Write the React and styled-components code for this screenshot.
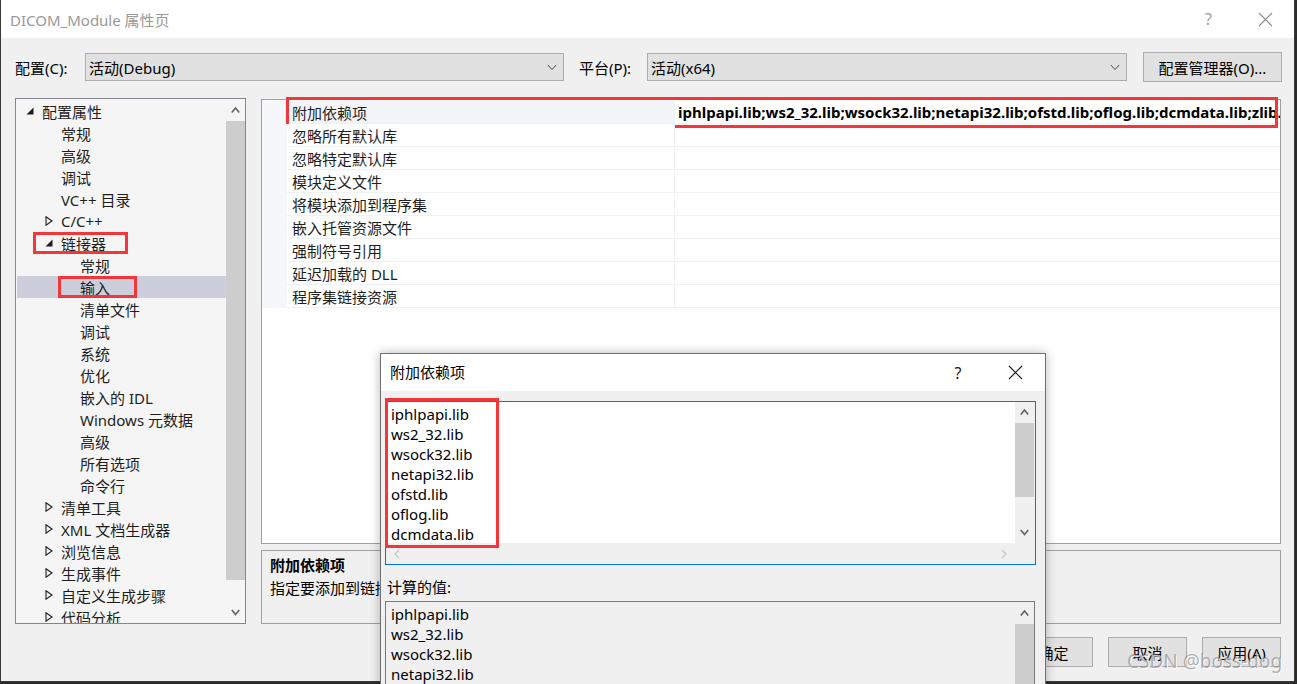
import React from 'react'
import styled, { createGlobalStyle } from 'styled-components'

const FONT = `"Noto Sans", "Noto Sans CJK SC", sans-serif`
const RED = '#f2363a'

const Global = createGlobalStyle`
  html, body { margin: 0; padding: 0; background: #f0f0f0; }
  body { font-family: ${FONT}; font-size: 15px; color: #1e1e1e; }
  * { box-sizing: border-box; }
`

const Screen = styled.div`
  position: relative;
  width: 1297px;
  height: 684px;
  overflow: hidden;
  background: #2b2b2b;
`

const Window = styled.div`
  width: 1295px;
  height: 682px;
  display: flex;
  flex-direction: column;
  background: #f0f0f0;
  border-left: 1px solid #3a3a3a;
  border-right: 1px solid #3a3a3a;
  border-bottom: 1px solid #3a3a3a;
`

const TitleBar = styled.div`
  height: ${p => p.$h || 38}px;
  flex: none;
  display: flex;
  align-items: center;
  background: #fff;
  padding-left: 9px;
  color: ${p => (p.$active ? '#000' : '#999')};
  font-size: 15px;
`

const TitleText = styled.div`
  flex: 1;
  padding-bottom: ${p => p.$pb || 0}px;
`

const TitleBtn = styled.div`
  width: ${p => p.$w || 57}px;
  height: 100%;
  display: flex;
  align-items: center;
  justify-content: center;
  color: ${p => (p.$active ? '#1a1a1a' : '#a0a0a0')};
  font-size: 16px;
`

const ConfigRow = styled.div`
  display: flex;
  align-items: center;
  height: 30px;
  margin-top: 14px;
  padding-left: 14px;
`

const Label = styled.div`
  width: ${p => p.$w}px;
  flex: none;
  margin-left: ${p => p.$ml || 0}px;
  font-size: 15px;
  color: #000;
`

const Combo = styled.div`
  width: ${p => p.$w}px;
  height: 28px;
  flex: none;
  display: flex;
  align-items: center;
  justify-content: space-between;
  padding: 0 6px 0 3px;
  background: #e1e1e1;
  border: 1px solid #adadad;
  color: #000;
`

const Button = styled.div`
  width: ${p => p.$w || 79}px;
  height: 30px;
  flex: none;
  display: flex;
  align-items: center;
  justify-content: center;
  background: #e1e1e1;
  border: 1px solid #adadad;
  color: #000;
  margin-left: ${p => p.$ml || 0}px;
`

const Main = styled.div`
  display: flex;
  gap: 15px;
  margin-top: 16px;
  padding: 0 13px 0 14px;
`

const TreePanel = styled.div`
  width: 231px;
  height: 526px;
  flex: none;
  display: flex;
  background: #f5f5f5;
  border: 1px solid #828790;
`

const TreeList = styled.div`
  flex: 1;
  padding-top: 1px;
  overflow: hidden;
`

const TreeRow = styled.div`
  position: relative;
  height: 22px;
  display: flex;
  align-items: center;
  padding-left: ${p => 9 + p.$level * 19}px;
  margin-left: 1px;
  background: ${p => (p.$sel ? '#cccedb' : 'transparent')};
  white-space: nowrap;
  color: #1e1e1e;
`

const Twisty = styled.div`
  width: 16px;
  flex: none;
  display: flex;
  align-items: center;
`

const Mark = styled.div`
  position: absolute;
  top: 0;
  bottom: 0;
  left: ${p => p.$left}px;
  width: ${p => p.$w}px;
  border: 3px solid ${RED};
  pointer-events: none;
`

const VScroll = styled.div`
  width: ${p => p.$w || 19}px;
  flex: none;
  display: flex;
  flex-direction: column;
  background: ${p => p.$bg || 'transparent'};
`

const ScrollArrow = styled.div`
  height: ${p => p.$h || 22}px;
  flex: none;
  display: flex;
  align-items: center;
  justify-content: center;
`

const Thumb = styled.div`
  height: ${p => p.$h}px;
  flex: none;
  background: #cdcdcd;
`

const Spacer = styled.div`
  flex: 1;
`

const RightCol = styled.div`
  flex: 1;
  display: flex;
  flex-direction: column;
`

const Grid = styled.div`
  height: 445px;
  margin-top: 1px;
  background: #fff;
  border: 1px solid #a0a0a0;
  padding-top: 1px;
`

const GridRow = styled.div`
  position: relative;
  display: grid;
  grid-template-columns: 25px 387px 1fr;
  height: 23px;
`

const Gutter = styled.div`
  background: #f5f7fa;
`

const NameCell = styled.div`
  display: flex;
  align-items: center;
  padding-left: 5px;
  background: ${p => (p.$sel ? '#f2f4f8' : '#fff')};
  border-bottom: 1px solid #eef1f6;
  color: #1e1e1e;
  white-space: nowrap;
`

const ValueCell = styled.div`
  display: flex;
  align-items: center;
  padding-left: 3px;
  border-left: 1px solid #eef1f6;
  border-bottom: 1px solid #eef1f6;
  font-weight: 700;
  color: #000;
  white-space: nowrap;
  overflow: hidden;
`

const RowMark = styled.div`
  position: absolute;
  top: -4px;
  bottom: -4px;
  left: 24px;
  right: 2px;
  border: 3px solid ${RED};
`

const Desc = styled.div`
  height: 74px;
  margin-top: 6px;
  border: 1px solid #a0a0a0;
  padding: 3px 8px;
  overflow: hidden;
  white-space: nowrap;
`

const DescTitle = styled.div`
  font-weight: 700;
  line-height: 23px;
  color: #000;
`

const DescText = styled.div`
  line-height: 23px;
  color: #000;
`

const ButtonRow = styled.div`
  display: flex;
  justify-content: flex-end;
  gap: 15px;
  margin-top: 13px;
  padding-right: 13px;
`

const Watermark = styled.div`
  position: absolute;
  left: 1127px;
  top: 648px;
  font-size: 19px;
  color: rgba(120, 120, 120, 0.55);
  text-shadow: 1px 1px 0 rgba(255, 255, 255, 0.8);
`

const Dialog = styled.div`
  position: absolute;
  left: 380px;
  top: 353px;
  width: 666px;
  height: 345px;
  display: flex;
  flex-direction: column;
  background: #f0f0f0;
  border: 1px solid #707070;
  box-shadow: 0 0 10px rgba(0, 0, 0, 0.28);
`

const DialogBody = styled.div`
  padding: 10px 8px 0 4px;
  display: flex;
  flex-direction: column;
`

const EditBox = styled.div`
  position: relative;
  width: 651px;
  height: 164px;
  display: grid;
  grid-template-columns: 1fr 20px;
  grid-template-rows: 1fr 21px;
  border: 1px solid #0078d7;
  background: #f0f0f0;
`

const Lines = styled.div`
  flex: 1;
  background: ${p => (p.$disabled ? '#f0f0f0' : '#fff')};
  padding: 2px 0 0 5px;
  overflow: hidden;
`

const Line = styled.div`
  height: 20px;
  line-height: 20px;
  color: #000;
`

const HScroll = styled.div`
  display: flex;
  align-items: center;
  justify-content: space-between;
  padding: 0 8px;
  background: #f0f0f0;
`

const EditMark = styled.div`
  position: absolute;
  left: -1px;
  top: -4px;
  width: 114px;
  height: 150px;
  border: 3px solid ${RED};
`

const ComputedLabel = styled.div`
  margin-top: 12px;
  padding-left: 2px;
  line-height: 20px;
  color: #000;
`

const ComputedBox = styled.div`
  width: 650px;
  height: 120px;
  margin-top: 4px;
  display: flex;
  border: 1px solid #7a7a7a;
  background: #f0f0f0;
`

const Chevron = ({ dir = 'down', color = '#606060', w = 9, h = 5, sw = 1.6 }) => (
  <svg width={w} height={h + 2} viewBox={`0 0 ${w} ${h + 2}`}>
    <polyline
      points={
        dir === 'down'
          ? `0.8,1 ${w / 2},${h + 0.5} ${w - 0.8},1`
          : `0.8,${h + 0.5} ${w / 2},1 ${w - 0.8},${h + 0.5}`
      }
      fill="none"
      stroke={color}
      strokeWidth={sw}
    />
  </svg>
)

const SideChevron = ({ dir }) => (
  <svg width="6" height="10" viewBox="0 0 6 10">
    <polyline
      points={dir === 'left' ? '5,1 1,5 5,9' : '1,1 5,5 1,9'}
      fill="none"
      stroke="#c4c4c4"
      strokeWidth="1.3"
    />
  </svg>
)

const CloseIcon = ({ color }) => (
  <svg width="15" height="15" viewBox="0 0 15 15">
    <path d="M1 1 L14 14 M14 1 L1 14" stroke={color} strokeWidth="1.1" />
  </svg>
)

const Expanded = () => (
  <svg width="8" height="8" viewBox="0 0 8 8">
    <polygon points="7.5,0.5 7.5,7.5 0.5,7.5" fill="#1e1e1e" />
  </svg>
)

const Collapsed = () => (
  <svg width="8" height="10" viewBox="0 0 8 10">
    <polygon points="1,0.8 7,5 1,9.2" fill="none" stroke="#1e1e1e" strokeWidth="1.1" />
  </svg>
)

const tree = [
  { l: 0, t: '配置属性', e: 'open' },
  { l: 1, t: '常规' },
  { l: 1, t: '高级' },
  { l: 1, t: '调试' },
  { l: 1, t: 'VC++ 目录' },
  { l: 1, t: 'C/C++', e: 'closed' },
  { l: 1, t: '链接器', e: 'open', mark: [16, 95] },
  { l: 2, t: '常规' },
  { l: 2, t: '输入', sel: true, mark: [41, 79] },
  { l: 2, t: '清单文件' },
  { l: 2, t: '调试' },
  { l: 2, t: '系统' },
  { l: 2, t: '优化' },
  { l: 2, t: '嵌入的 IDL' },
  { l: 2, t: 'Windows 元数据' },
  { l: 2, t: '高级' },
  { l: 2, t: '所有选项' },
  { l: 2, t: '命令行' },
  { l: 1, t: '清单工具', e: 'closed' },
  { l: 1, t: 'XML 文档生成器', e: 'closed' },
  { l: 1, t: '浏览信息', e: 'closed' },
  { l: 1, t: '生成事件', e: 'closed' },
  { l: 1, t: '自定义生成步骤', e: 'closed' },
  { l: 1, t: '代码分析', e: 'closed' },
]

const props = [
  '附加依赖项',
  '忽略所有默认库',
  '忽略特定默认库',
  '模块定义文件',
  '将模块添加到程序集',
  '嵌入托管资源文件',
  '强制符号引用',
  '延迟加载的 DLL',
  '程序集链接资源',
]

const libs = ['iphlpapi.lib', 'ws2_32.lib', 'wsock32.lib', 'netapi32.lib', 'ofstd.lib', 'oflog.lib', 'dcmdata.lib']

const deps =
  'iphlpapi.lib;ws2_32.lib;wsock32.lib;netapi32.lib;ofstd.lib;oflog.lib;dcmdata.lib;zlib.lib;dcmimgle.lib;dcmimage.lib;%(AdditionalDependencies)'

const App = () => {
  return (
    <Screen>
      <Global />
      <Window>
        <TitleBar>
          <TitleText>DICOM_Module 属性页</TitleText>
          <TitleBtn>?</TitleBtn>
          <TitleBtn>
            <CloseIcon color="#8c8c8c" />
          </TitleBtn>
        </TitleBar>

        <ConfigRow>
          <Label $w={70}>配置(C):</Label>
          <Combo $w={479}>
            活动(Debug)
            <Chevron color="#444" w={10} h={5} sw={1} />
          </Combo>
          <Label $w={68} $ml={15}>平台(P):</Label>
          <Combo $w={480}>
            活动(x64)
            <Chevron color="#444" w={10} h={5} sw={1} />
          </Combo>
          <Button $w={139} $ml={16}>配置管理器(O)...</Button>
        </ConfigRow>

        <Main>
          <TreePanel>
            <TreeList>
              {tree.map((n, i) => (
                <TreeRow key={i} $level={n.l} $sel={n.sel}>
                  <Twisty>
                    {n.e === 'open' && <Expanded />}
                    {n.e === 'closed' && <Collapsed />}
                  </Twisty>
                  {n.t}
                  {n.mark && <Mark $left={n.mark[0]} $w={n.mark[1]} />}
                </TreeRow>
              ))}
            </TreeList>
            <VScroll>
              <ScrollArrow>
                <Chevron dir="up" />
              </ScrollArrow>
              <Thumb $h={459} />
              <Spacer />
              <ScrollArrow>
                <Chevron dir="down" />
              </ScrollArrow>
            </VScroll>
          </TreePanel>

          <RightCol>
            <Grid>
              {props.map((p, i) => (
                <GridRow key={p}>
                  <Gutter />
                  <NameCell $sel={i === 0}>{p}</NameCell>
                  <ValueCell>{i === 0 ? deps : ''}</ValueCell>
                  {i === 0 && <RowMark />}
                </GridRow>
              ))}
            </Grid>
            <Desc>
              <DescTitle>附加依赖项</DescTitle>
              <DescText>指定要添加到链接命令行的附加项。例如 kernel32.lib</DescText>
            </Desc>
          </RightCol>
        </Main>

        <ButtonRow>
          <Button>确定</Button>
          <Button>取消</Button>
          <Button>应用(A)</Button>
        </ButtonRow>
      </Window>

      <Watermark>CSDN @boss-dog</Watermark>

      <Dialog>
        <TitleBar $active $h={37}>
          <TitleText $pb={3}>附加依赖项</TitleText>
          <TitleBtn $active $w={54}>?</TitleBtn>
          <TitleBtn $active $w={60}>
            <CloseIcon color="#1a1a1a" />
          </TitleBtn>
        </TitleBar>
        <DialogBody>
          <EditBox>
            <Lines>
              {libs.map(l => (
                <Line key={l}>{l}</Line>
              ))}
            </Lines>
            <VScroll $bg="#f0f0f0">
              <ScrollArrow $h={21}>
                <Chevron dir="up" />
              </ScrollArrow>
              <Thumb $h={74} />
              <Spacer />
              <ScrollArrow $h={21}>
                <Chevron dir="down" />
              </ScrollArrow>
            </VScroll>
            <HScroll>
              <SideChevron dir="left" />
              <SideChevron dir="right" />
            </HScroll>
            <div />
            <EditMark />
          </EditBox>
          <ComputedLabel>计算的值:</ComputedLabel>
          <ComputedBox>
            <Lines $disabled>
              {libs.map(l => (
                <Line key={l}>{l}</Line>
              ))}
            </Lines>
            <VScroll $bg="#f0f0f0">
              <ScrollArrow $h={22}>
                <Chevron dir="up" />
              </ScrollArrow>
              <Thumb $h={90} />
            </VScroll>
          </ComputedBox>
        </DialogBody>
      </Dialog>
    </Screen>
  )
}

export default App
